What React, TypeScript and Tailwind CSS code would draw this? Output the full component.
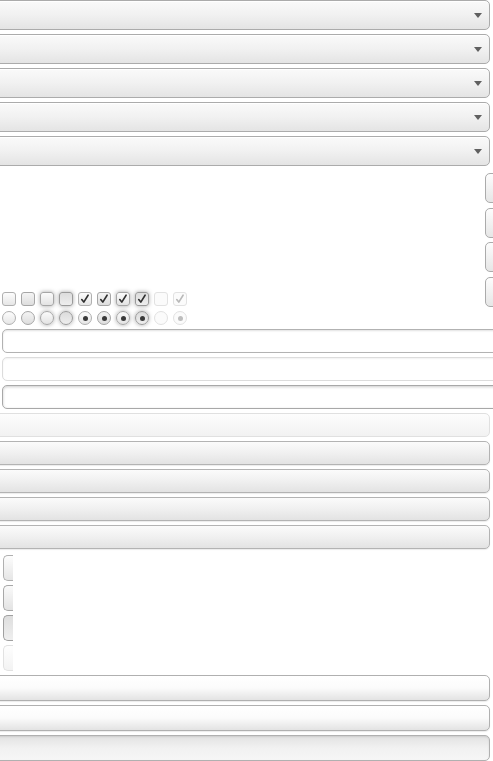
import React from "react";

type State = "normal" | "hover" | "focus" | "active" | "disabled";

const boxState: Record<State, string> = {
  normal: "border-[#b0b0b0] bg-gradient-to-b from-[#fdfdfd] to-[#e6e6e6]",
  hover: "border-[#a6a6a6] bg-gradient-to-b from-[#f4f4f4] to-[#dedede]",
  focus:
    "border-[#a6a6a6] bg-gradient-to-b from-[#fbfbfb] to-[#e3e3e3] shadow-[0_0_4px_rgba(0,0,0,0.35)]",
  active:
    "border-[#9a9a9a] bg-gradient-to-b from-[#dcdcdc] to-[#eeeeee] shadow-[0_0_4px_rgba(0,0,0,0.35)]",
  disabled: "border-[#e2e2e2] bg-[#fbfbfb]",
};

function Check({ faint }: { faint?: boolean }) {
  return (
    <svg viewBox="0 0 14 14" className="w-[12px] h-[12px]">
      <path
        d="M3.2 7.6 L5.6 10.6 L10.6 2.6"
        fill="none"
        stroke={faint ? "#b8b8b8" : "#2f2f2f"}
        strokeWidth="1.9"
        strokeLinecap="round"
        strokeLinejoin="round"
      />
    </svg>
  );
}

function Checkbox({ state, checked }: { state: State; checked?: boolean }) {
  return (
    <div
      className={`w-[14px] h-[14px] rounded-[3px] border flex items-center justify-center ${boxState[state]}`}
    >
      {checked && <Check faint={state === "disabled"} />}
    </div>
  );
}

function Radio({ state, checked }: { state: State; checked?: boolean }) {
  return (
    <div
      className={`w-[14px] h-[14px] rounded-full border flex items-center justify-center ${boxState[state]}`}
    >
      {checked && (
        <div
          className={`w-[5px] h-[5px] rounded-full ${
            state === "disabled" ? "bg-[#bdbdbd]" : "bg-[#3a3a3a]"
          }`}
        />
      )}
    </div>
  );
}

const states: { state: State; checked?: boolean }[] = [
  { state: "normal" },
  { state: "hover" },
  { state: "focus" },
  { state: "active" },
  { state: "normal", checked: true },
  { state: "hover", checked: true },
  { state: "focus", checked: true },
  { state: "active", checked: true },
  { state: "disabled" },
  { state: "disabled", checked: true },
];

function Select() {
  return (
    <div className="-ml-[10px] mr-[3px] h-[30px] rounded-[5px] border border-[#ababab] bg-gradient-to-b from-[#fafafa] via-[#f1f1f1] to-[#e4e4e4] shadow-[inset_0_1px_0_#ffffff] flex items-center justify-end pr-[7px]">
      <div className="w-0 h-0 border-l-[4px] border-r-[4px] border-t-[5px] border-l-transparent border-r-transparent border-t-[#606060]" />
    </div>
  );
}

function SideButton() {
  return (
    <div className="w-[20px] -mr-[12px] h-[30px] rounded-[5px] border border-[#ababab] bg-gradient-to-b from-[#fdfdfd] to-[#e6e6e6]" />
  );
}

function TextInput({ variant }: { variant: "normal" | "disabled" | "focus" }) {
  const cls =
    variant === "disabled"
      ? "border-[#dcdcdc] shadow-[inset_0_1px_2px_rgba(0,0,0,0.06)]"
      : variant === "focus"
      ? "border-[#a8a8a8] shadow-[inset_0_1px_3px_rgba(0,0,0,0.2)]"
      : "border-[#b2b2b2] shadow-[inset_0_1px_2px_rgba(0,0,0,0.12)]";
  return (
    <div
      className={`ml-[2px] -mr-[20px] h-[24px] rounded-[5px] border bg-white ${cls}`}
    />
  );
}

function WideButton({ disabled }: { disabled?: boolean }) {
  return (
    <div
      className={`-ml-[10px] mr-[3px] h-[24px] rounded-[5px] border ${
        disabled
          ? "border-[#e0e0e0] bg-gradient-to-b from-[#fdfdfd] to-[#f2f2f2]"
          : "border-[#b3b3b3] bg-gradient-to-b from-[#fbfbfb] via-[#f0f0f0] to-[#e3e3e3] shadow-[0_1px_1px_rgba(0,0,0,0.08)]"
      }`}
    />
  );
}

function StubButton({ state }: { state: "normal" | "hover" | "active" | "disabled" }) {
  const cls =
    state === "disabled"
      ? "border-[#e2e2e2] bg-gradient-to-b from-[#fefefe] to-[#f3f3f3]"
      : state === "active"
      ? "border-[#a0a0a0] bg-gradient-to-b from-[#dedede] to-[#efefef]"
      : state === "hover"
      ? "border-[#a8a8a8] bg-gradient-to-b from-[#fafafa] to-[#e3e3e3]"
      : "border-[#b0b0b0] bg-gradient-to-b from-[#fdfdfd] to-[#e6e6e6]";
  return (
    <div
      className={`ml-[3px] w-[10px] h-[26px] rounded-l-[5px] border border-r-0 ${cls}`}
    />
  );
}

function GlossButton({ pressed }: { pressed?: boolean }) {
  return (
    <div
      className={`-ml-[10px] mr-[3px] h-[26px] rounded-[5px] border border-[#b0b0b0] ${
        pressed
          ? "bg-gradient-to-b from-[#e2e2e2] via-[#f1f1f1] to-[#f6f6f6] shadow-[inset_0_1px_2px_rgba(0,0,0,0.1)]"
          : "bg-gradient-to-b from-[#ffffff] via-[#fbfbfb] to-[#e3e3e3] shadow-[0_1px_1px_rgba(0,0,0,0.08)]"
      }`}
    />
  );
}

export default function App() {
  return (
    <div
      className="w-full min-h-screen overflow-hidden bg-white"
      style={{ fontFamily: '"Liberation Sans", Arial, sans-serif' }}
    >
      <div className="flex flex-col gap-[4px]">
        <Select />
        <Select />
        <Select />
        <Select />
        <Select />
      </div>

      <div className="flex items-start">
        <div className="flex-1 pt-[126px] flex flex-col gap-[5px]">
          <div className="flex gap-[5px] pl-[2px]">
            {states.map((s, i) => (
              <Checkbox key={i} state={s.state} checked={s.checked} />
            ))}
          </div>
          <div className="flex gap-[5px] pl-[2px]">
            {states.map((s, i) => (
              <Radio key={i} state={s.state} checked={s.checked} />
            ))}
          </div>
        </div>
        <div className="pt-[7px] flex flex-col gap-[4.5px]">
          <SideButton />
          <SideButton />
          <SideButton />
          <SideButton />
        </div>
      </div>

      <div className="mt-[4px] flex flex-col gap-[4px]">
        <TextInput variant="normal" />
        <TextInput variant="disabled" />
        <TextInput variant="focus" />
      </div>

      <div className="mt-[4px] flex flex-col gap-[4px]">
        <WideButton disabled />
        <WideButton />
        <WideButton />
        <WideButton />
        <WideButton />
      </div>

      <div className="mt-[6px] flex flex-col gap-[4px]">
        <StubButton state="normal" />
        <StubButton state="hover" />
        <StubButton state="active" />
        <StubButton state="disabled" />
      </div>

      <div className="mt-[4px] flex flex-col gap-[4px]">
        <GlossButton />
        <GlossButton />
        <GlossButton pressed />
      </div>
    </div>
  );
}
